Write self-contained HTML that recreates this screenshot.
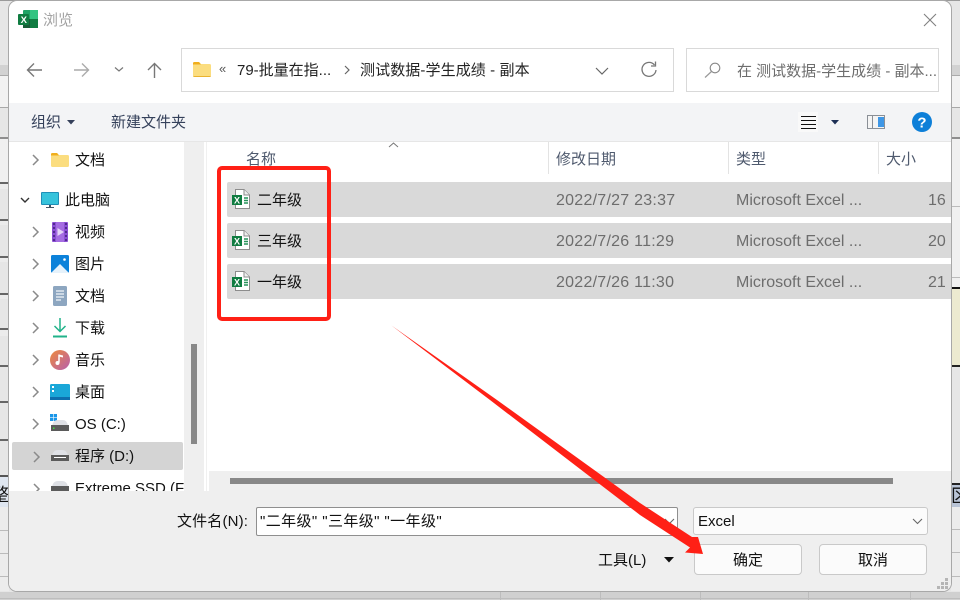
<!DOCTYPE html>
<html><head><meta charset="utf-8"><style>
html,body{margin:0;padding:0;width:960px;height:600px;overflow:hidden;background:#e6e6e6}
body{position:relative;font-family:"Liberation Sans","Noto Sans CJK SC",sans-serif;font-size:15px;color:#111}
.a{position:absolute}
.t{position:absolute;white-space:nowrap;line-height:20px;margin-top:1px}
.l{position:absolute;height:2px}
.row{position:absolute;left:227px;width:724px;height:35px;background:#d9d9d9;border-radius:2px 0 0 2px}
.h{color:#4f5a6e}
.g{color:#6d6d6d}
.d{font-size:16px;letter-spacing:.25px}
.m{font-size:16px}
svg{position:absolute;overflow:visible}
.btn{position:absolute;background:#fbfbfb;border:1px solid #c9c9c9;border-radius:4px;box-sizing:border-box;text-align:center;line-height:31px}
</style></head><body>

<!-- spreadsheet background -->
<div class="a" style="left:0;top:65px;width:960px;height:10px;background:#d2d2d2"></div>
<div class="a" style="left:0;top:75px;width:9px;height:32px;background:#f2f2f2"></div>
<div class="a" style="left:0;top:137px;width:9px;height:45px;background:#f0f0f0"></div>
<div class="a" style="left:951px;top:75px;width:9px;height:32px;background:#f2f2f2"></div>
<div class="a" style="left:951px;top:137px;width:9px;height:69px;background:#f0f0f0"></div>
<div class="a" style="left:951px;top:206px;width:9px;height:81px;background:#f0f0f0"></div>
<div class="l" style="left:0;top:75px;width:960px;height:1px;background:#aaa"></div>
<div class="l" style="left:0;top:107px;width:960px;height:1px;background:#a8a8a8"></div>
<div class="l" style="left:0;top:137px;width:960px;background:#8e8e8e"></div>
<div class="l" style="left:951px;top:206px;width:9px;height:1px;background:#bbb"></div>
<div class="l" style="left:951px;top:277px;width:9px;height:1px;background:#bbb"></div>
<div class="a" style="left:951px;top:288px;width:9px;height:77px;background:#ecead0"></div>
<div class="l" style="left:951px;top:287px;width:9px;background:#111"></div>
<div class="l" style="left:951px;top:365px;width:9px;background:#222"></div>
<div class="a" style="left:0;top:182px;width:9px;height:7px;background:#ececec"></div>
<div class="a" style="left:0;top:219px;width:9px;height:6px;background:#ececec"></div>
<div class="a" style="left:0;top:256px;width:9px;height:6px;background:#ececec"></div>
<div class="a" style="left:0;top:293px;width:9px;height:6px;background:#ececec"></div>
<div class="a" style="left:0;top:328px;width:9px;height:8px;background:#ececec"></div>
<div class="l" style="left:0;top:182px;width:9px;background:#666"></div>
<div class="l" style="left:0;top:219px;width:9px;background:#666"></div>
<div class="l" style="left:0;top:256px;width:9px;background:#666"></div>
<div class="l" style="left:0;top:293px;width:9px;background:#666"></div>
<div class="l" style="left:0;top:328px;width:9px;background:#666"></div>
<div class="l" style="left:0;top:365px;width:9px;background:#666"></div>
<div class="l" style="left:0;top:401px;width:9px;background:#666"></div>
<div class="l" style="left:0;top:439px;width:9px;background:#666"></div>
<div class="l" style="left:0;top:475px;width:9px;background:#555"></div>
<div class="a" style="left:0;top:477px;width:9px;height:30px;background:#dfe6f0;overflow:hidden"><span class="t" style="left:-9px;top:7px;font-size:18px">整</span></div>
<div class="a" style="left:951px;top:485px;width:9px;height:22px;background:#b9c4d6;overflow:hidden"><span class="t" style="left:0;top:0;font-size:18px">区</span></div>
<div class="l" style="left:951px;top:483px;width:9px;background:#222"></div>
<div class="a" style="left:0;top:507px;width:9px;height:84px;background:#ececec"></div>
<div class="a" style="left:951px;top:507px;width:9px;height:84px;background:#ececec"></div>
<div class="l" style="left:0;top:530px;width:9px;height:1px;background:#bbb"></div>
<div class="l" style="left:0;top:553px;width:9px;height:1px;background:#bbb"></div>
<div class="l" style="left:0;top:576px;width:9px;height:1px;background:#bbb"></div>
<div class="l" style="left:951px;top:529px;width:9px;height:1px;background:#bbb"></div>
<div class="l" style="left:951px;top:552px;width:9px;height:1px;background:#bbb"></div>
<div class="l" style="left:951px;top:576px;width:9px;height:1px;background:#bbb"></div>
<div class="a" style="left:0;top:592px;width:960px;height:8px;background:#d0d0d0"></div>
<div class="l" style="left:0;top:598px;width:960px;height:1px;background:#bdbdbd"></div>
<div class="a" style="left:500px;top:591px;width:1px;height:9px;background:#bdbdbd"></div>
<div class="a" style="left:600px;top:591px;width:1px;height:9px;background:#bdbdbd"></div>
<div class="a" style="left:700px;top:591px;width:1px;height:9px;background:#bdbdbd"></div>
<div class="a" style="left:808px;top:591px;width:1px;height:9px;background:#bdbdbd"></div>
<div class="a" style="left:910px;top:591px;width:1px;height:9px;background:#bdbdbd"></div>
<div class="a" style="left:0;top:0;width:960px;height:1px;background:#9a9a9a"></div>

<!-- dialog -->
<div class="a" style="left:9px;top:1px;width:942px;height:590px;background:#fff;border-radius:8px;overflow:hidden;box-shadow:0 0 0 1px #a8a8a8">
  <div class="a" style="left:0;top:102px;width:942px;height:38px;background:#f3f4f6"></div>
  <div class="a" style="left:0;top:140px;width:942px;height:1px;background:#e6e6e6"></div>
  <div class="a" style="left:175px;top:141px;width:20px;height:350px;background:#efefef"></div>
  <div class="a" style="left:197px;top:141px;width:1px;height:350px;background:#f0f0f0"></div>
  <div class="a" style="left:182px;top:343px;width:6px;height:100px;background:#888"></div>
  <div class="a" style="left:200px;top:470px;width:742px;height:21px;background:#efefef"></div>
  <div class="a" style="left:221px;top:477px;width:663px;height:6px;background:#888"></div>
  <div class="a" style="left:0;top:490px;width:942px;height:100px;background:#efefef"></div>
</div>

<!-- title bar -->
<svg style="left:18px;top:10px" width="20" height="18" viewBox="0 0 20 18">
  <rect x="5" y="0" width="15" height="18" rx="1" fill="#21a366"/>
  <rect x="12" y="0" width="8" height="9" fill="#33c481"/>
  <rect x="12" y="9" width="8" height="9" fill="#107c41"/>
  <rect x="5" y="9" width="7" height="9" fill="#185c37"/>
  <rect x="0" y="4" width="11" height="11" rx="1" fill="#107c41"/>
  <text x="2.6" y="13" font-size="9.5" font-weight="700" fill="#fff" font-family="Liberation Sans">X</text>
</svg>
<span class="t" style="left:43px;top:10px;font-size:15px;color:#a3a3a3">浏览</span>
<svg style="left:923px;top:13px" width="14" height="14"><path d="M1 1L13 13M13 1L1 13" stroke="#808080" stroke-width="1.1" fill="none"/></svg>

<!-- nav buttons -->
<svg style="left:26px;top:62px" width="150" height="18" fill="none">
  <path d="M16 8H2M8 1.5L1.5 8L8 14.5" stroke="#777" stroke-width="1.4"/>
  <path d="M48 8H62M56 1.5L62.5 8L56 14.5" stroke="#aaa" stroke-width="1.4"/>
  <path d="M89 5.5L93 9L97 5.5" stroke="#777" stroke-width="1.2"/>
  <path d="M128.500 16V2M122 8L128.500 1.500L135 8" stroke="#777" stroke-width="1.4"/>
</svg>

<!-- address bar -->
<div class="a" style="left:181px;top:48px;width:493px;height:44px;box-sizing:border-box;border:1px solid #d9d9d9"></div>
<div class="a" style="left:686px;top:48px;width:253px;height:44px;box-sizing:border-box;border:1px solid #d9d9d9"></div>
<svg style="left:193px;top:62px" width="18" height="15"><path d="M0 1.500Q0 0 1.500 0H6L8 2H16.500Q18 2 18 3.500V13.500Q18 15 16.500 15H1.500Q0 15 0 13.500Z" fill="#fbdd7f"/><path d="M0 1.500Q0 0 1.500 0H6L8 2.500H0Z" fill="#f0ae1d"/><path d="M0 14H18V13.500Q18 15 16.500 15H1.500Q0 15 0 13.500Z" fill="#eab32f"/></svg>
<span class="t" style="left:219px;top:58px;font-size:13px;color:#555">«</span>
<span class="t" style="left:237px;top:60px;color:#222">79-批量在指...</span>
<svg style="left:344px;top:65px" width="7" height="10" fill="none"><path d="M1 1L5 5L1 9" stroke="#666" stroke-width="1.2"/></svg>
<span class="t" style="left:360px;top:60px;color:#222;letter-spacing:.1px">测试数据-学生成绩 - 副本</span>
<svg style="left:595px;top:67px" width="14" height="9" fill="none"><path d="M1 1L7 7L13 1" stroke="#666" stroke-width="1.2"/></svg>
<svg style="left:640px;top:61px" width="18" height="18" fill="none"><path d="M14.500 4A7 7 0 1 0 16 9" stroke="#777" stroke-width="1.3"/><path d="M15.500 0.500V5H11" stroke="#777" stroke-width="1.3"/></svg>
<svg style="left:704px;top:62px" width="17" height="16" fill="none"><circle cx="11" cy="6" r="4.800" stroke="#888" stroke-width="1.1"/><path d="M7.500 9.500L1 15.500" stroke="#999" stroke-width="1.2"/></svg>
<span class="t" style="left:737px;top:61px;color:#6d6d6d">在 测试数据-学生成绩 - 副本...</span>

<!-- toolbar -->
<span class="t" style="left:31px;top:112px;color:#34405a">组织</span>
<svg style="left:67px;top:120px" width="8" height="5"><path d="M0 0H8L4 4.500Z" fill="#34405a"/></svg>
<span class="t" style="left:111px;top:112px;color:#34405a">新建文件夹</span>
<div class="a" style="left:798px;top:112px;width:20px;height:20px;background:#f9f9f9"></div>
<svg style="left:801px;top:116px" width="15" height="13"><path d="M0 .5H15M0 4.500H15M0 8.500H15M0 12.500H15" stroke="#111" stroke-width="1"/></svg>
<svg style="left:831px;top:120px" width="8" height="5"><path d="M0 0H8L4 4.500Z" fill="#1d2f55"/></svg>
<svg style="left:867px;top:115px" width="18" height="14"><rect x=".5" y=".5" width="17" height="13" fill="#f4f4f4" stroke="#8a8f96"/><rect x="11" y="2" width="6" height="10" fill="#3f97e6"/><rect x="5" y="1" width="1" height="12" fill="#8a8f96"/></svg>
<svg style="left:912px;top:112px" width="20" height="20"><circle cx="10" cy="10" r="10" fill="#0d7fd8"/><text x="10" y="15.500" text-anchor="middle" font-size="15" font-weight="700" fill="#fff" font-family="Liberation Sans">?</text></svg>

<!-- nav tree -->
<svg style="left:0;top:0" width="210" height="500" fill="none">
  <g stroke="#8a8a8a" stroke-width="1.500">
    <path d="M33 155L38 160L33 165"/>
    <path d="M33 227L38 232L33 237"/>
    <path d="M33 259L38 264L33 269"/>
    <path d="M33 291L38 296L33 301"/>
    <path d="M33 323L38 328L33 333"/>
    <path d="M33 355L38 360L33 365"/>
    <path d="M33 387L38 392L33 397"/>
    <path d="M33 419L38 424L33 429"/>
  </g>
</svg>
<svg style="left:51px;top:153px" width="18" height="14"><path d="M0 1.500Q0 0 1.500 0H6L8 2H16.500Q18 2 18 3.500V12.500Q18 14 16.500 14H1.500Q0 14 0 12.500Z" fill="#fbdd7f"/><path d="M0 1.500Q0 0 1.500 0H6L8 2.500H0Z" fill="#f0ae1d"/></svg>
<span class="t" style="left:75px;top:150px">文档</span>

<svg style="left:20px;top:197px" width="10" height="7" fill="none"><path d="M1 1L5 5L9 1" stroke="#333" stroke-width="1.400"/></svg>
<svg style="left:41px;top:192px" width="18" height="16"><rect width="18" height="13" rx="1" fill="#1f8fb8"/><rect x="1" y="1" width="16" height="11" fill="#36c3dc"/><rect x="8" y="13" width="2" height="2" fill="#456"/><rect x="5" y="15" width="8" height="1" fill="#456"/></svg>
<span class="t" style="left:65px;top:190px">此电脑</span>

<svg style="left:52px;top:222px" width="16" height="20"><rect width="16" height="20" rx="1" fill="#8b4fd4"/><rect x="4" y="0" width="8" height="20" fill="#a56de2"/><path d="M5.500 6L12 10L5.500 14Z" fill="#e4d4f7"/><path d="M1 2h2M1 6h2M1 10h2M1 14h2M1 18h2M13 2h2M13 6h2M13 10h2M13 14h2M13 18h2" stroke="#3f1f7a" stroke-width="1.500"/></svg>
<span class="t" style="left:75px;top:222px">视频</span>

<svg style="left:51px;top:255px" width="18" height="18"><rect width="18" height="18" rx="1.500" fill="#0c82da"/><path d="M0 18L9 9L18 18Z" fill="#e6f2fb"/><circle cx="13.500" cy="4.500" r="1.300" fill="#fff"/></svg>
<span class="t" style="left:75px;top:254px">图片</span>

<svg style="left:53px;top:286px" width="14" height="20"><rect width="14" height="20" rx="1.500" fill="#8da6c0"/><path d="M3 5h8M3 8h8M3 11h8M3 14h5" stroke="#f3f6fa" stroke-width="1.200"/></svg>
<span class="t" style="left:75px;top:286px">文档</span>

<svg style="left:53px;top:318px" width="14" height="20" fill="none"><path d="M7 0V13M1.500 8L7 13.500L12.500 8" stroke="#21b38a" stroke-width="1.500"/><path d="M0 18.500H14" stroke="#21b38a" stroke-width="2"/></svg>
<span class="t" style="left:75px;top:318px">下载</span>

<svg style="left:50px;top:350px" width="20" height="20"><defs><linearGradient id="m" x1="0" y1="0" x2="1" y2="1"><stop offset="0" stop-color="#ee8a3c"/><stop offset="1" stop-color="#b65fae"/></linearGradient></defs><circle cx="10" cy="10" r="10" fill="url(#m)"/><path d="M9 4.500V12.500" stroke="#fff" stroke-width="1.500"/><path d="M9 4.500L13 5.500V7.500L9 6.500Z" fill="#fff"/><circle cx="7.500" cy="13" r="2" fill="#fff"/></svg>
<span class="t" style="left:75px;top:350px">音乐</span>

<svg style="left:50px;top:384px" width="20" height="16"><rect width="20" height="16" rx="1.500" fill="#1aa7d8"/><rect y="13" width="20" height="3" fill="#0e6fae"/><rect x="2" y="2" width="2" height="2" fill="#fff"/><rect x="2" y="6" width="2" height="2" fill="#fff"/></svg>
<span class="t" style="left:75px;top:382px">桌面</span>

<svg style="left:50px;top:414px" width="20" height="18"><rect width="3.200" height="3.200" fill="#1a96e8"/><rect x="3.800" width="3.200" height="3.200" fill="#1a96e8"/><rect y="3.800" width="3.200" height="3.200" fill="#1a96e8"/><rect x="3.800" y="3.800" width="3.200" height="3.200" fill="#1a96e8"/><path d="M2 12Q3 6 8 6H13Q17 6 18 12Z" fill="#dfe1e6"/><rect x="1" y="11" width="18" height="6" fill="#5b5b5b"/><rect x="3" y="13.500" width="1.500" height="1.500" fill="#3fdc3f"/></svg>
<span class="t" style="left:75px;top:414px">OS (C:)</span>

<div class="a" style="left:12px;top:442px;width:171px;height:28px;background:#d4d4d4;border-radius:2px"></div>
<svg style="left:33px;top:451px" width="7" height="12" fill="none"><path d="M1 1L6 6L1 11" stroke="#8a8a8a" stroke-width="1.500"/></svg>
<svg style="left:51px;top:450px" width="18" height="11"><path d="M1 6Q2 0 7 0H11Q16 0 17 6Z" fill="#dfe1e6"/><rect x="0" y="5" width="18" height="6" fill="#5b5b5b"/><rect x="3" y="7" width="12" height="1" fill="#fff"/></svg>
<span class="t" style="left:75px;top:446px">程序 (D:)</span>

<div class="a" style="left:9px;top:478px;width:175px;height:13px;overflow:hidden">
  <svg style="left:24px;top:5px" width="7" height="12" fill="none"><path d="M1 1L6 6L1 11" stroke="#8a8a8a" stroke-width="1.500"/></svg>
  <svg style="left:42px;top:3px" width="18" height="14"><path d="M1 6Q2 0 7 0H11Q16 0 17 6Z" fill="#dfe1e6"/><rect x="0" y="5" width="18" height="7" fill="#5b5b5b"/></svg>
  <span class="t" style="left:66px;top:0;">Extreme SSD (F</span>
</div>

<!-- column headers -->
<span class="t h" style="left:246px;top:149px">名称</span>
<svg style="left:388px;top:142px" width="11" height="6" fill="none"><path d="M1 5L5.500 1L10 5" stroke="#777" stroke-width="1"/></svg>
<div class="a" style="left:548px;top:142px;width:1px;height:32px;background:#e3e3e3"></div>
<span class="t h" style="left:556px;top:149px">修改日期</span>
<div class="a" style="left:728px;top:142px;width:1px;height:32px;background:#e3e3e3"></div>
<span class="t h" style="left:736px;top:149px">类型</span>
<div class="a" style="left:878px;top:142px;width:1px;height:32px;background:#e3e3e3"></div>
<span class="t h" style="left:886px;top:149px">大小</span>

<!-- rows -->
<div class="row" style="top:182px"></div>
<div class="row" style="top:223px"></div>
<div class="row" style="top:264px"></div>

<svg style="left:232px;top:189px" width="18" height="20"><path d="M3.500.5H12L17.500 6V19.500H3.500Z" fill="#fff" stroke="#8d8d8d"/><path d="M12 .5V6H17.500" fill="#eee" stroke="#8d8d8d"/><path d="M12 9h4M12 11.500h4M12 14h4" stroke="#27935a" stroke-width="1.400"/><rect y="6" width="10" height="10" fill="#107c41"/><text x="2" y="14.500" font-size="9" font-weight="700" fill="#fff" font-family="Liberation Sans">X</text></svg>
<span class="t" style="left:257px;top:190px">二年级</span>
<span class="t g d" style="left:556px;top:190px">2022/7/27 23:37</span>
<span class="t g m" style="left:736px;top:190px">Microsoft Excel ...</span>
<span class="t g m" style="left:928px;top:190px">16</span>

<svg style="left:232px;top:230px" width="18" height="20"><path d="M3.500.5H12L17.500 6V19.500H3.500Z" fill="#fff" stroke="#8d8d8d"/><path d="M12 .5V6H17.500" fill="#eee" stroke="#8d8d8d"/><path d="M12 9h4M12 11.500h4M12 14h4" stroke="#27935a" stroke-width="1.400"/><rect y="6" width="10" height="10" fill="#107c41"/><text x="2" y="14.500" font-size="9" font-weight="700" fill="#fff" font-family="Liberation Sans">X</text></svg>
<span class="t" style="left:257px;top:231px">三年级</span>
<span class="t g d" style="left:556px;top:231px">2022/7/26 11:29</span>
<span class="t g m" style="left:736px;top:231px">Microsoft Excel ...</span>
<span class="t g m" style="left:928px;top:231px">20</span>

<svg style="left:232px;top:271px" width="18" height="20"><path d="M3.500.5H12L17.500 6V19.500H3.500Z" fill="#fff" stroke="#8d8d8d"/><path d="M12 .5V6H17.500" fill="#eee" stroke="#8d8d8d"/><path d="M12 9h4M12 11.500h4M12 14h4" stroke="#27935a" stroke-width="1.400"/><rect y="6" width="10" height="10" fill="#107c41"/><text x="2" y="14.500" font-size="9" font-weight="700" fill="#fff" font-family="Liberation Sans">X</text></svg>
<span class="t" style="left:257px;top:272px">一年级</span>
<span class="t g d" style="left:556px;top:272px">2022/7/26 11:30</span>
<span class="t g m" style="left:736px;top:272px">Microsoft Excel ...</span>
<span class="t g m" style="left:928px;top:272px">21</span>

<!-- footer -->
<span class="t" style="left:177px;top:511px;letter-spacing:.15px">文件名(N):</span>
<div class="a" style="left:256px;top:507px;width:422px;height:29px;box-sizing:border-box;background:#fff;border:1px solid #8f8f8f;border-radius:2px"></div>
<span class="t" style="left:260px;top:511px;letter-spacing:.4px">"二年级" "三年级" "一年级"</span>
<svg style="left:664px;top:518px" width="11" height="7" fill="none"><path d="M1 1L5.500 5.500L10 1" stroke="#666" stroke-width="1.100"/></svg>
<div class="a" style="left:693px;top:507px;width:235px;height:28px;box-sizing:border-box;background:#fbfbfb;border:1px solid #c9c9c9;border-radius:3px"></div>
<span class="t" style="left:698px;top:511px">Excel</span>
<svg style="left:912px;top:518px" width="11" height="7" fill="none"><path d="M1 1L5.500 5.500L10 1" stroke="#666" stroke-width="1.100"/></svg>
<span class="t" style="left:598px;top:550px">工具(L)</span>
<svg style="left:664px;top:557px" width="10" height="6"><path d="M0 0H10L5 5.500Z" fill="#111"/></svg>
<div class="btn" style="left:694px;top:544px;width:108px;height:31px">确定</div>
<div class="btn" style="left:819px;top:544px;width:108px;height:31px">取消</div>
<svg style="left:937px;top:578px" width="12" height="12" fill="#b5b5b5"><rect x="8" width="3" height="3"/><rect x="4" y="4" width="3" height="3"/><rect x="8" y="4" width="3" height="3"/><rect y="8" width="3" height="3"/><rect x="4" y="8" width="3" height="3"/><rect x="8" y="8" width="3" height="3"/></svg>

<!-- annotations -->
<div class="a" style="left:217px;top:166px;width:114px;height:155px;box-sizing:border-box;border:4px solid #ff2016;border-radius:5px"></div>
<svg style="left:0;top:0" width="960" height="600"><path d="M391.500 325.500L497 400L640 503L692 537L698 537L703 554L685 552.500L690 547.500L640 515L490 400Z" fill="#ff2016"/></svg>

</body></html>
